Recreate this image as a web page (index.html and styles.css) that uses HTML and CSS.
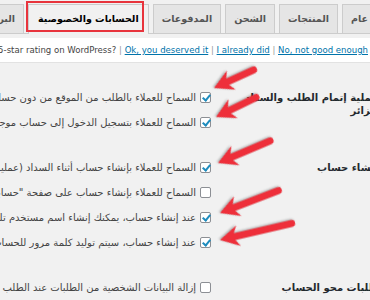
FILE: index.html
```html
<!DOCTYPE html>
<html lang="ar" dir="rtl">
<head>
    <meta charset="UTF-8">
    <meta name="viewport" content="width=device-width, initial-scale=1.0">
    <title>الإعدادات - الحسابات والخصوصية</title>
    <link rel="stylesheet" href="styles.css">
</head>
<body>

    <div class="wrap">
        <nav class="nav-tabs">
            <a href="#" class="nav-tab">عام</a>
            <a href="#" class="nav-tab">المنتجات</a>
            <a href="#" class="nav-tab">الشحن</a>
            <a href="#" class="nav-tab">المدفوعات</a>
            <a href="#" class="nav-tab nav-tab-active">الحسابات والخصوصية</a>
            <a href="#" class="nav-tab">البريد الإلكتروني</a>
        </nav>

        <div class="notice">
            <p><span dir="ltr">Could you please give it a 5-star rating on WordPress? <i>|</i> <a href="#">Ok, you deserved it</a> <i>|</i> <a href="#">I already did</a> <i>|</i> <a href="#">No, not good enough</a></span></p>
        </div>

        <div class="form-table">
            <div class="row">
                <div class="th">عملية إتمام الطلب والسداد للزائر</div>
                <div class="td">
                    <label class="opt"><input type="checkbox" checked>السماح للعملاء بالطلب من الموقع من دون حساب</label>
                    <label class="opt"><input type="checkbox" checked>السماح للعملاء بتسجيل الدخول إلى حساب موجود أثناء السداد</label>
                </div>
            </div>
            <div class="row">
                <div class="th">إنشاء حساب</div>
                <div class="td">
                    <label class="opt"><input type="checkbox" checked>السماح للعملاء بإنشاء حساب أثناء السداد (عملية إتمام الطلب)</label>
                    <label class="opt"><input type="checkbox">السماح للعملاء بإنشاء حساب على صفحة "حسابي"</label>
                    <label class="opt"><input type="checkbox" checked>عند إنشاء حساب، يمكنك إنشاء اسم مستخدم تلقائيا للعميل</label>
                    <label class="opt"><input type="checkbox" checked>عند إنشاء حساب، سيتم توليد كلمة مرور للحساب تلقائيا</label>
                </div>
            </div>
            <div class="row">
                <div class="th">طلبات محو الحساب</div>
                <div class="td">
                    <label class="opt"><input type="checkbox">إزالة البيانات الشخصية من الطلبات عند الطلب</label>
                    <label class="opt"><input type="checkbox">إزالة الوصول إلى التنزيلات عند الطلب</label>
                </div>
            </div>
        </div>
    </div>

    <!-- arrows drawn over the screenshot -->
    <svg class="arrows" width="370" height="300" viewBox="0 0 370 300">
        <g class="arrow">
            <path transform="translate(214 88) rotate(155.5)" d="M0 0 L-19 -10.5 L-15 -3.5 L-43.5 -3.5 A3.5 3.5 0 0 0 -43.5 3.5 L-15 3.5 L-19 10.5 Z"/>
            <path transform="translate(216 117) rotate(154)" d="M0 0 L-19 -10.5 L-15 -3.5 L-44.5 -3.5 A3.5 3.5 0 0 0 -44.5 3.5 L-15 3.5 L-19 10.5 Z"/>
            <path transform="translate(218 163) rotate(157)" d="M0 0 L-19 -10.5 L-15 -3.5 L-56.5 -3.5 A3.5 3.5 0 0 0 -56.5 3.5 L-15 3.5 L-19 10.5 Z"/>
            <path transform="translate(220 213) rotate(159)" d="M0 0 L-19 -10.5 L-15 -3.5 L-62.5 -3.5 A3.5 3.5 0 0 0 -62.5 3.5 L-15 3.5 L-19 10.5 Z"/>
            <path transform="translate(220 240) rotate(167)" d="M0 0 L-19 -10.5 L-15 -3.5 L-73.5 -3.5 A3.5 3.5 0 0 0 -73.5 3.5 L-15 3.5 L-19 10.5 Z"/>
        </g>
    </svg>

</body>
</html>
```

FILE: styles.css
```css
html, body {
    margin: 0;
    padding: 0;
}

body {
    font-family: 'DejaVu Sans', sans-serif;
    background: #f1f1f1;
    color: #444;
    font-size: 10px;
    overflow: hidden;
    position: relative;
    height: 300px;
}

.wrap {
    direction: rtl;
    margin-right: -10px;
    overflow: hidden;
}

/* tabs */
.nav-tabs {
    display: flex;
    gap: 4px;
    padding: 4px 3px 0 0;
    border-bottom: 1px solid #ccc;
    white-space: nowrap;
}

.nav-tab {
    box-sizing: border-box;
    height: 29px;
    line-height: 28px;
    padding: 0 8px;
    border: 1px solid #ccc;
    border-bottom: none;
    background: #e5e5e5;
    color: #555;
    font-size: 9.5px;
    font-weight: bold;
    text-decoration: none;
    flex-shrink: 0;
}

.nav-tab-active {
    position: relative;
    height: 30px;
    margin-bottom: -1px;
    background: #f1f1f1;
    color: #000;
    padding: 0 9px;
}

/* red box round the active tab */
.nav-tab-active::after {
    content: "";
    position: absolute;
    top: -4px;
    bottom: 2px;
    left: -3px;
    right: 4px;
    border: 2px solid #e8343d;
}

/* rating notice */
.notice {
    margin-top: 4px;
    background: #fff;
    border-bottom: 1px solid #e2e2e2;
    padding: 0 12px 0 0;
    height: 24px;
}

.notice p {
    margin: 0;
    line-height: 24px;
    font-size: 8.55px;
    white-space: nowrap;
    text-align: right;
    color: #444;
}

.notice a {
    color: #0073aa;
}

.notice i {
    font-style: normal;
    color: #999;
}

/* settings table */
.form-table {
    margin-top: 12px;
}

.row {
    display: grid;
    grid-template-columns: 150px minmax(0, 1fr);
}

.th {
    padding: 16px 2px 0 4px;
    font-weight: bold;
    color: #23282d;
    line-height: 13px;
}

.td {
    padding: 10px 19px 10px 0;
}

.opt {
    display: block;
    height: 25px;
    line-height: 25px;
    white-space: nowrap;
    color: #444;
}

.opt input {
    appearance: none;
    -webkit-appearance: none;
    box-sizing: border-box;
    width: 11px;
    height: 11px;
    margin: 0 0 0 4px;
    border: 1px solid #8c8f94;
    border-radius: 2px;
    background: #fff;
    vertical-align: middle;
    position: relative;
    top: -1px;
}

.opt input:checked::before {
    content: "";
    position: absolute;
    left: 3px;
    top: 0;
    width: 3px;
    height: 6px;
    border: solid #1e8cbe;
    border-width: 0 2px 2px 0;
    transform: rotate(40deg);
}

/* annotation arrows */
.arrows {
    position: absolute;
    top: 0;
    left: 0;
    pointer-events: none;
}

.arrow path {
    fill: #ee2f3a;
    filter: drop-shadow(1px 1px 1px rgba(0, 0, 0, 0.3));
}
```
